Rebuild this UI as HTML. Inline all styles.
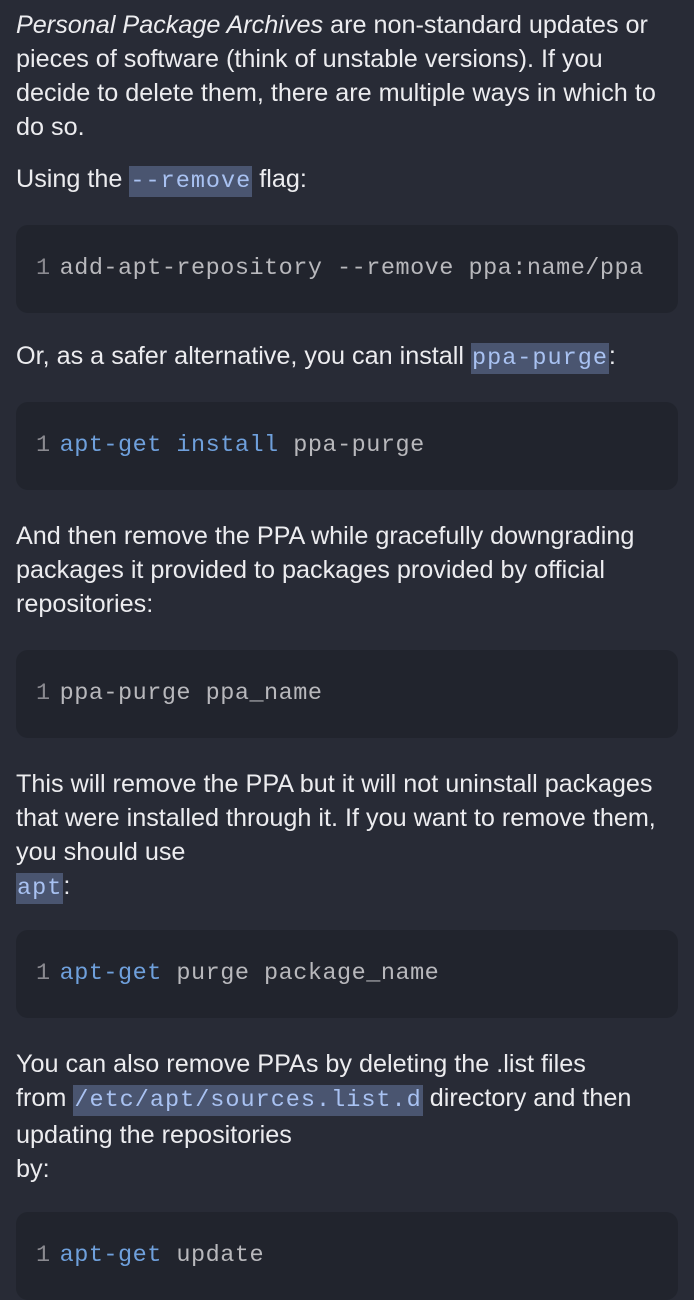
<!DOCTYPE html>
<html><head><meta charset="utf-8"><style>
body{margin:0;width:694px;height:1295px;background:#282b36;overflow:hidden;font-family:"Liberation Sans",sans-serif;color:#ececef;font-size:25.2px;}
.p{position:absolute;left:16px;width:680px;line-height:34px;white-space:nowrap}
.c{font-family:"Liberation Mono",monospace;background:#4a5570;color:#a9c2f2;padding:2px 1px;font-size:23.5px;letter-spacing:1px}
.b{position:absolute;left:16px;width:662px;height:88px;background:#21242d;border-radius:12px;font-family:"Liberation Mono",monospace;font-size:23.5px;letter-spacing:0.5px;color:#b8b8bc;line-height:88px;padding-left:20px;box-sizing:border-box;white-space:pre}
.n{color:#8a8a90;margin-right:9px}.k{color:#6fa0dc}
</style></head><body>
<div class="p" style="top:8px"><i>Personal Package Archives</i> are non-standard updates or<br>pieces of software (think of unstable versions). If you<br>decide to delete them, there are multiple ways in which to<br>do so.</div>
<div class="p" style="top:162px">Using the <span class="c">--remove</span> flag:</div>
<div class="b" style="top:225px"><span class="n">1</span>add-apt-repository --remove ppa:name/ppa</div>
<div class="p" style="top:339px">Or, as a safer alternative, you can install <span class="c">ppa-purge</span>:</div>
<div class="b" style="top:402px"><span class="n">1</span><span class="k">apt-get install</span> ppa-purge</div>
<div class="p" style="top:519px">And then remove the PPA while gracefully downgrading<br>packages it provided to packages provided by official<br>repositories:</div>
<div class="b" style="top:650px"><span class="n">1</span>ppa-purge ppa_name</div>
<div class="p" style="top:767px">This will remove the PPA but it will not uninstall packages<br>that were installed through it. If you want to remove them,<br>you should use<br><span class="c">apt</span>:</div>
<div class="b" style="top:930px"><span class="n">1</span><span class="k">apt-get</span> purge package_name</div>
<div class="p" style="top:1047px">You can also remove PPAs by deleting the .list files<br>from <span class="c">/etc/apt/sources.list.d</span> directory and then<br>updating the repositories<br>by:</div>
<div class="b" style="top:1212px"><span class="n">1</span><span class="k">apt-get</span> update</div>
</body></html>
